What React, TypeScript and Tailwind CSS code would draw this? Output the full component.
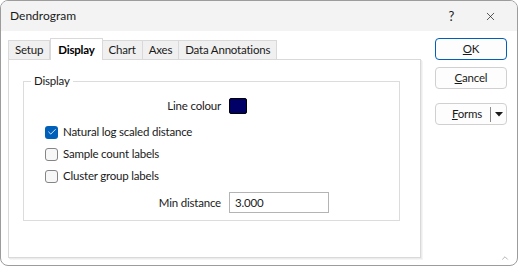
import { Check, ChevronUp, X } from "lucide-react";

const FONT = "font-['Lato','Noto_Sans',sans-serif]";

function Tab({ label, active }: { label: string; active?: boolean }) {
    if (active) {
        return (
            <div className="relative z-10 -mb-px flex h-[22px] items-center border border-b-0 border-[#d9d9d9] bg-white px-[7px] font-bold text-black">
                {label}
            </div>
        );
    }
    return (
        <div className="flex h-[19px] items-center border border-b-0 border-l-0 border-[#d9d9d9] bg-[#f0f0f0] px-[6px] first:border-l">
            {label}
        </div>
    );
}

function CheckRow({ label, checked }: { label: string; checked?: boolean }) {
    return (
        <div className="flex h-[22px] items-center gap-[5px] pl-[21px]">
            {checked ? (
                <span className="flex h-[13px] w-[13px] items-center justify-center rounded-[3px] bg-[#005fb8]">
                    <Check className="h-[10px] w-[10px] text-white" strokeWidth={2} />
                </span>
            ) : (
                <span className="h-[13px] w-[13px] rounded-[3px] border border-[#858585] bg-[#f7f7f7]" />
            )}
            <span>{label}</span>
        </div>
    );
}

function Button({ children, primary }: { children: React.ReactNode; primary?: boolean }) {
    return (
        <div
            className={
                "flex h-[22px] w-[72px] items-center justify-center rounded-[4px] border bg-[#fdfdfd] " +
                (primary ? "border-[#005fb8]" : "border-[#d0d0d0]")
            }
        >
            {children}
        </div>
    );
}

export default function App() {
    return (
        <div className={`h-[267px] w-[518px] bg-white text-[11.5px] leading-none tracking-[-0.2px] text-[#1a1a1a] ${FONT}`}>
            <div className="flex h-[266px] w-[518px] flex-col overflow-hidden rounded-[8px] border border-[#9c9c9c] bg-white">
                {/* Title bar */}
                <div className="flex h-[30px] shrink-0 items-center bg-[#f3f3f3] pl-[9px]">
                    <span className="text-[12px] tracking-normal">Dendrogram</span>
                    <span className="ml-auto mr-[30px] text-[13px]">?</span>
                    <X className="mr-[20px] h-[13px] w-[13px] text-[#1a1a1a]" strokeWidth={1.3} />
                </div>

                <div className="flex flex-1">
                    {/* Tabs + page */}
                    <div className="flex flex-col pl-[7px] pt-[7px]">
                        <div className="flex items-end">
                            <Tab label="Setup" />
                            <Tab label="Display" active />
                            <Tab label="Chart" />
                            <Tab label="Axes" />
                            <Tab label="Data Annotations" />
                        </div>
                        <div className="h-[199px] w-[413px] border border-[#d9d9d9] bg-white pl-[14px] pr-[20px] pt-[21px] shadow-[1px_1px_0_#ececec,2px_2px_0_#f5f5f5]">
                            <div className="relative h-[140px] border border-[#dcdcdc] pt-[15px]">
                                <span className="absolute -top-[7px] left-[7px] bg-white px-[3px]">Display</span>
                                <div className="flex h-[17px] items-center">
                                    <span className="w-[197px] text-right">Line colour</span>
                                    <span className="ml-[8px] h-[16px] w-[18px] rounded-[2px] border border-black bg-[#000066]" />
                                </div>
                                <div className="mt-[7px]">
                                    <CheckRow label="Natural log scaled distance" checked />
                                    <CheckRow label="Sample count labels" />
                                    <CheckRow label="Cluster group labels" />
                                </div>
                                <div className="mt-[5px] flex h-[21px] items-center">
                                    <span className="w-[197px] text-right">Min distance</span>
                                    <span className="ml-[8px] flex h-[21px] w-[100px] items-center border border-[#b4b4b4] pl-[5px]">
                                        3.000
                                    </span>
                                </div>
                            </div>
                        </div>
                    </div>

                    {/* Buttons */}
                    <div className="ml-[14px] flex flex-col gap-[7px] pt-[7px]">
                        <Button primary>
                            <span><span className="underline">O</span>K</span>
                        </Button>
                        <Button>
                            <span><span className="underline">C</span>ancel</span>
                        </Button>
                        <div className="mt-[7px] flex h-[22px] w-[72px] items-center rounded-[4px] border border-[#d0d0d0] bg-[#fdfdfd]">
                            <span className="flex-1 pl-[8px] text-center">
                                <span className="underline">F</span>orms
                            </span>
                            <span className="h-[15px] w-px bg-[#8a8a8a]" />
                            <span className="flex w-[15px] justify-center">
                                <svg width="8" height="5" viewBox="0 0 8 5">
                                    <path d="M0 0h8L4 4.5z" fill="#1a1a1a" />
                                </svg>
                            </span>
                        </div>
                        <div className="mt-auto -mr-[5px] mb-[2px] flex justify-end">
                            <ChevronUp className="h-[10px] w-[14px] text-[#6a6a6a]" strokeWidth={1.2} />
                        </div>
                    </div>
                </div>
            </div>
        </div>
    );
}
